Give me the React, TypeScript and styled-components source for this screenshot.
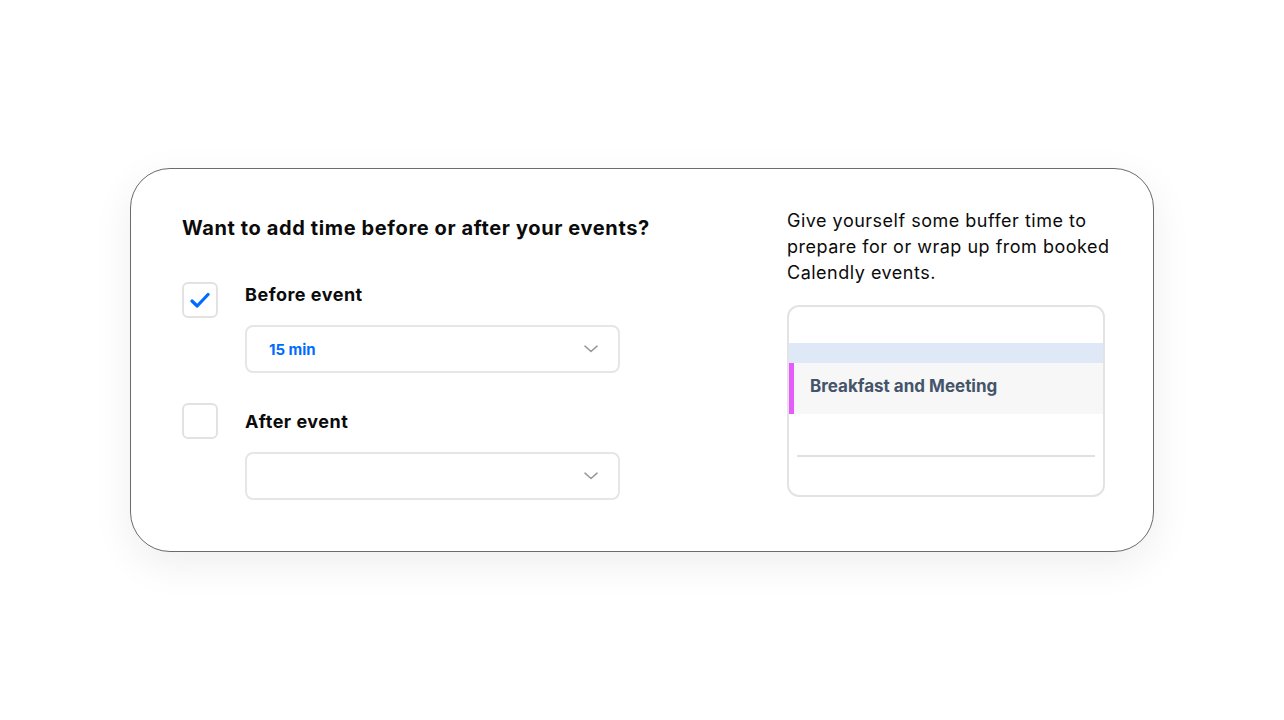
import React from "react";
import styled, { createGlobalStyle } from "styled-components";

const Global = createGlobalStyle`
  * { box-sizing: border-box; }
  html, body { margin: 0; padding: 0; background: #ffffff; }
  body { font-family: Inter, "Noto Sans", Arial, sans-serif; color: #0a0a0a; }
`;

const Page = styled.div`
  width: 100%;
  height: 720px;
  display: flex;
  align-items: center;
  justify-content: center;
`;

const Card = styled.div`
  width: 1024px;
  height: 384px;
  border: 1px solid #6b6b6b;
  border-radius: 40px;
  background: #fff;
  box-shadow: 0 12px 40px rgba(0, 0, 0, 0.07);
  padding: 37px 34px 0 51px;
  display: flex;
  justify-content: space-between;
`;

const LeftCol = styled.div`
  width: 480px;
  display: flex;
  flex-direction: column;
`;

const Heading = styled.h2`
  margin: 8px 0 0;
  font-size: 20px;
  line-height: 28px;
  font-weight: 700;
  color: #0b0b0b;
  letter-spacing: 0.62px;
  white-space: nowrap;
`;

const Options = styled.div`
  margin-top: 40px;
  display: flex;
  flex-direction: column;
  gap: 30px;
`;

const OptionRow = styled.div`
  display: flex;
  align-items: flex-start;
  gap: 27px;
`;

const Box = styled.div`
  width: 36px;
  height: 36px;
  flex: none;
  border: 2px solid #e2e2e2;
  border-radius: 6px;
  display: flex;
  align-items: center;
  justify-content: center;
  background: #fff;
`;

const OptionBody = styled.div<{ $offset: number }>`
  display: flex;
  flex-direction: column;
  gap: 17px;
  padding-top: ${(p) => p.$offset}px;
`;

const Label = styled.div`
  font-size: 18px;
  line-height: 26px;
  font-weight: 700;
  color: #0b0b0b;
  letter-spacing: 0.5px;
`;

const Select = styled.div`
  width: 375px;
  height: 48px;
  border: 2px solid #e6e6e6;
  border-radius: 8px;
  display: flex;
  align-items: center;
  justify-content: space-between;
  padding: 0 20px 0 22px;
`;

const SelectValue = styled.span`
  font-size: 15px;
  font-weight: 700;
  color: #006bff;
`;

const RightCol = styled.div`
  width: 332px;
  display: flex;
  flex-direction: column;
  padding-top: 2px;
`;

const Blurb = styled.p`
  margin: 0;
  font-size: 18px;
  line-height: 26px;
  font-weight: 400;
  color: #0b0b0b;
  letter-spacing: 0.5px;
`;

const Preview = styled.div`
  margin-top: 19px;
  width: 318px;
  height: 192px;
  border: 2px solid #e3e3e3;
  border-radius: 12px;
  overflow: hidden;
  display: flex;
  flex-direction: column;
`;

const Spacer = styled.div<{ $h: number }>`
  height: ${(p) => p.$h}px;
  flex: none;
`;

const Buffer = styled.div`
  height: 20px;
  background: #dfe8f7;
`;

const EventRow = styled.div`
  height: 51px;
  background: #f7f7f7;
  border-left: 5px solid #e45dfb;
  display: flex;
  align-items: center;
  padding: 0 0 5px 16px;
  font-size: 17px;
  font-weight: 700;
  color: #44546a;
`;

const Divider = styled.div`
  margin: 0 8px;
  height: 2px;
  background: #e0e0e0;
`;

const Chevron = () => (
  <svg width="14" height="8" viewBox="0 0 14 8" fill="none">
    <path d="M1 1.2L7 6.5L13 1.2" stroke="#9b9b9b" strokeWidth="1.6" strokeLinecap="round" strokeLinejoin="round" />
  </svg>
);

const Check = () => (
  <svg width="20" height="17" viewBox="0 0 20 17" fill="none">
    <path d="M2 9L7.2 14L18 2.5" stroke="#006bff" strokeWidth="3.2" strokeLinecap="round" strokeLinejoin="round" />
  </svg>
);

export default function App() {
  return (
    <>
      <Global />
      <Page>
        <Card>
          <LeftCol>
            <Heading>Want to add time before or after your events?</Heading>
            <Options>
              <OptionRow>
                <Box>
                  <Check />
                </Box>
                <OptionBody $offset={0}>
                  <Label>Before event</Label>
                  <Select>
                    <SelectValue>15 min</SelectValue>
                    <Chevron />
                  </Select>
                </OptionBody>
              </OptionRow>
              <OptionRow>
                <Box />
                <OptionBody $offset={6}>
                  <Label>After event</Label>
                  <Select>
                    <SelectValue />
                    <Chevron />
                  </Select>
                </OptionBody>
              </OptionRow>
            </Options>
          </LeftCol>
          <RightCol>
            <Blurb>
              Give yourself some buffer time to prepare for or wrap up from booked Calendly events.
            </Blurb>
            <Preview>
              <Spacer $h={36} />
              <Buffer />
              <EventRow>Breakfast and Meeting</EventRow>
              <Spacer $h={41} />
              <Divider />
            </Preview>
          </RightCol>
        </Card>
      </Page>
    </>
  );
}
